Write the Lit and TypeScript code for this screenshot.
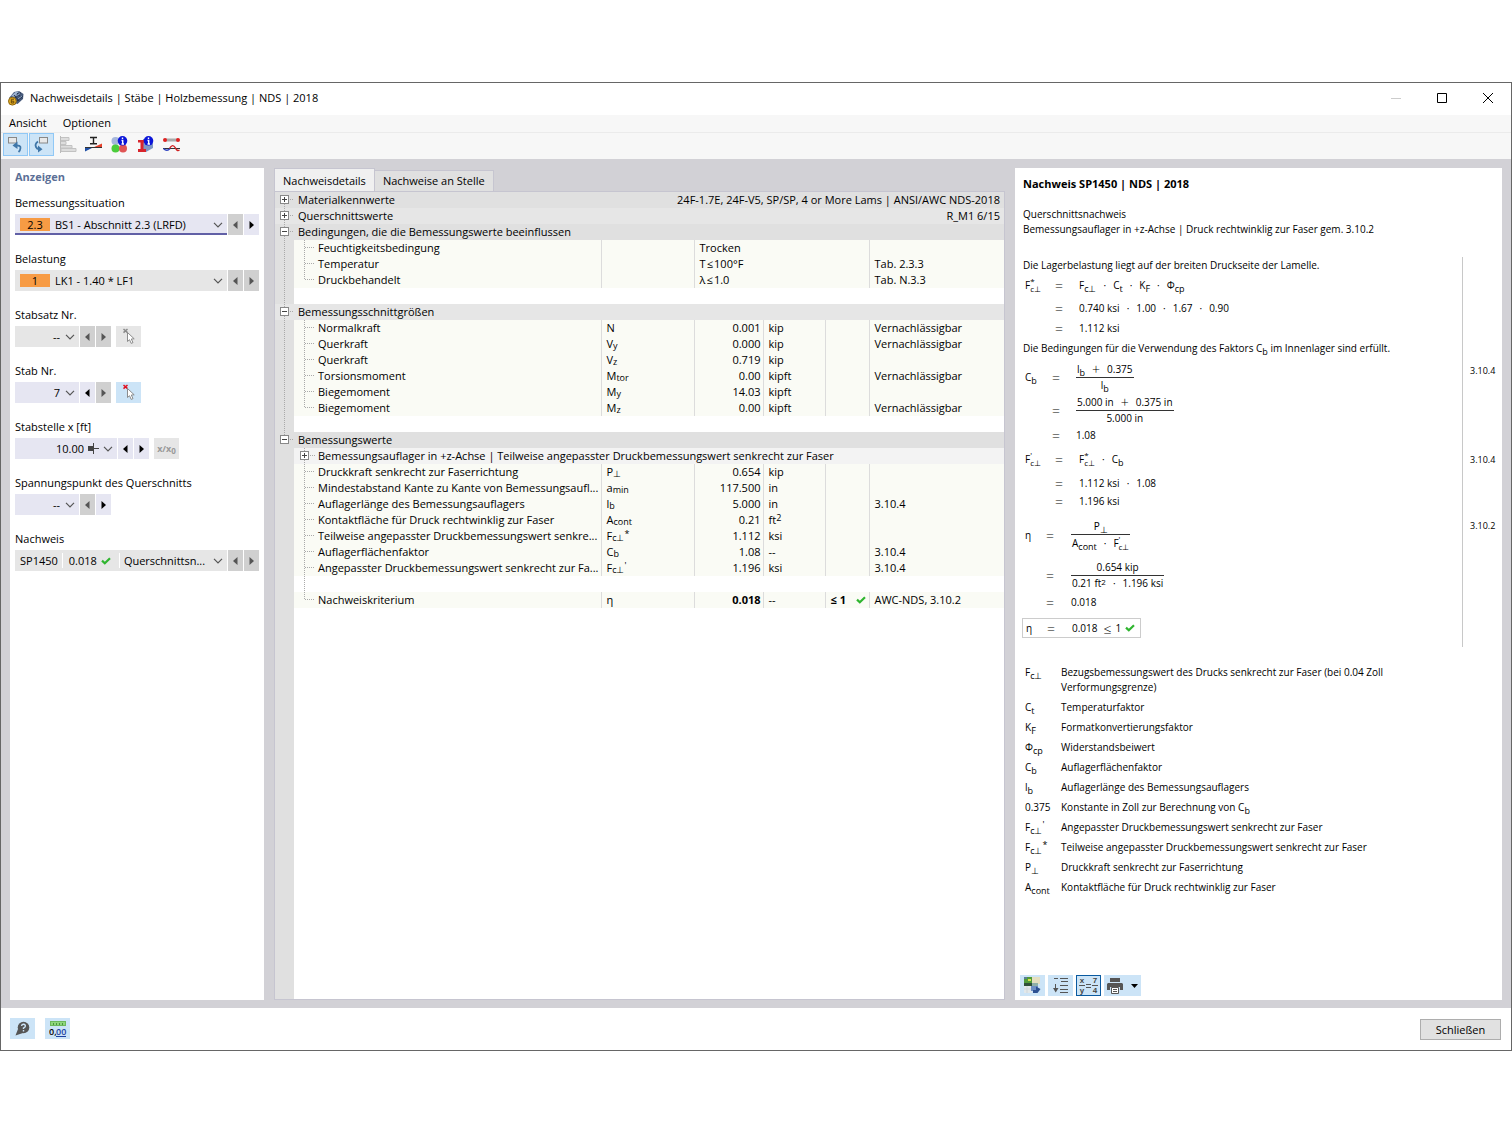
import { LitElement, html, css, svg, nothing } from "lit";
import type { TemplateResult } from "lit";
import { customElement, property, state } from "lit/decorators.js";
import { classMap } from "lit/directives/class-map.js";

type Content = string | TemplateResult;

interface DataRow {
  kind: "data";
  name: string;
  symbol?: Content;
  value?: Content;
  unit?: Content;
  limit?: Content;
  note?: string;
  wide?: boolean;
  strong?: boolean;
  last?: boolean;
}
interface GroupRow {
  kind: "group";
  name: string;
  open: boolean;
  detail?: string;
  shade: "dark" | "mid";
  first?: boolean;
  end?: boolean;
}
interface SubGroupRow {
  kind: "sub";
  name: string;
}
interface BlankRow {
  kind: "blank";
  branch?: boolean;
}
type Row = DataRow | GroupRow | SubGroupRow | BlankRow;

const sub = (base: string, index: string) => html`${base}<sub>${index}</sub>`;

const ROWS: Row[] = [
  { kind: "group", name: "Materialkennwerte", open: false, detail: "24F-1.7E, 24F-V5, SP/SP, 4 or More Lams | ANSI/AWC NDS-2018", shade: "dark", first: true },
  { kind: "group", name: "Querschnittswerte", open: false, detail: "R_M1 6/15", shade: "mid" },
  { kind: "group", name: "Bedingungen, die die Bemessungswerte beeinflussen", open: true, shade: "dark" },
  { kind: "data", name: "Feuchtigkeitsbedingung", value: "Trocken", wide: true },
  { kind: "data", name: "Temperatur", value: "T\u200a≤\u200a100°F", note: "Tab. 2.3.3", wide: true },
  { kind: "data", name: "Druckbehandelt", value: "λ\u200a≤\u200a1.0", note: "Tab. N.3.3", wide: true, last: true },
  { kind: "blank" },
  { kind: "group", name: "Bemessungsschnittgrößen", open: true, shade: "mid" },
  { kind: "data", name: "Normalkraft", symbol: "N", value: "0.001", unit: "kip", note: "Vernachlässigbar" },
  { kind: "data", name: "Querkraft", symbol: sub("V", "y"), value: "0.000", unit: "kip", note: "Vernachlässigbar" },
  { kind: "data", name: "Querkraft", symbol: sub("V", "z"), value: "0.719", unit: "kip" },
  { kind: "data", name: "Torsionsmoment", symbol: sub("M", "tor"), value: "0.00", unit: "kipft", note: "Vernachlässigbar" },
  { kind: "data", name: "Biegemoment", symbol: sub("M", "y"), value: "14.03", unit: "kipft" },
  { kind: "data", name: "Biegemoment", symbol: sub("M", "z"), value: "0.00", unit: "kipft", note: "Vernachlässigbar", last: true },
  { kind: "blank" },
  { kind: "group", name: "Bemessungswerte", open: true, shade: "dark", end: true },
  { kind: "sub", name: "Bemessungsauflager in +z-Achse | Teilweise angepasster Druckbemessungswert senkrecht zur Faser" },
  { kind: "data", name: "Druckkraft senkrecht zur Faserrichtung", symbol: sub("P", "⊥"), value: "0.654", unit: "kip" },
  { kind: "data", name: "Mindestabstand Kante zu Kante von Bemessungsaufl...", symbol: sub("a", "min"), value: "117.500", unit: "in" },
  { kind: "data", name: "Auflagerlänge des Bemessungsauflagers", symbol: sub("l", "b"), value: "5.000", unit: "in", note: "3.10.4" },
  { kind: "data", name: "Kontaktfläche für Druck rechtwinklig zur Faser", symbol: sub("A", "cont"), value: "0.21", unit: html`ft<sup>2</sup>` },
  { kind: "data", name: "Teilweise angepasster Druckbemessungswert senkre...", symbol: html`F<sub>c⊥</sub><sup>*</sup>`, value: "1.112", unit: "ksi" },
  { kind: "data", name: "Auflagerflächenfaktor", symbol: sub("C", "b"), value: "1.08", unit: "--", note: "3.10.4" },
  { kind: "data", name: "Angepasster Druckbemessungswert senkrecht zur Fa...", symbol: html`F<sub>c⊥</sub><sup>'</sup>`, value: "1.196", unit: "ksi", note: "3.10.4" },
  { kind: "blank", branch: true },
  { kind: "data", name: "Nachweiskriterium", symbol: "η", value: "0.018", unit: "--", limit: "≤ 1", note: "AWC-NDS, 3.10.2", strong: true, last: true },
];

const check = html`<svg class="check" width="10" height="8" viewBox="0 0 10 8" aria-hidden="true">
  <path d="M1 3.6 L3.8 6.2 L9 1.2" fill="none" stroke="#2fb52f" stroke-width="2.2" />
</svg>`;

const chevron = html`<svg class="chevron" width="10" height="6" viewBox="0 0 10 6" aria-hidden="true">
  <path d="M1 0.8 L5 4.8 L9 0.8" fill="none" stroke="#555" stroke-width="1.2" />
</svg>`;

const arrow = (dir: "left" | "right") => html`<svg width="5" height="8" viewBox="0 0 5 8" aria-hidden="true">
  <path d=${dir === "left" ? "M4.5 0 V8 L0 4 Z" : "M0.5 0 V8 L5 4 Z"} fill="currentColor" />
</svg>`;

const fontStyles = css`
  * {
    box-sizing: border-box;
  }
  button,
  input,
  select {
    font: inherit;
    color: inherit;
    border: 0;
    border-radius: 0;
    margin: 0;
    padding: 0;
    background: none;
  }
  svg {
    display: block;
    flex: none;
  }
  sub,
  sup {
    font-size: 9px;
    line-height: 0;
  }
  sub {
    vertical-align: -1px;
  }
  sup {
    vertical-align: 3px;
  }
`;

/* ---------- selection panel ---------- */

@customElement("filter-panel")
export class FilterPanel extends LitElement {
  static styles = [
    fontStyles,
    css`
      :host {
        display: block;
        background: #fff;
        padding: 1px 5px;
      }
      h2 {
        margin: 0 0 10px;
        font-size: 11px;
        line-height: 16px;
        color: #5b6f96;
      }
      .field {
        margin-bottom: 16px;
      }
      label {
        display: block;
        line-height: 16px;
        margin-bottom: 3px;
      }
      .line {
        display: flex;
        gap: 1px;
        height: 21px;
      }
      .combo {
        display: flex;
        align-items: center;
        gap: 5px;
        width: 64px;
        padding: 0 4px 0 5px;
        background: #e6e6f2;
      }
      .combo.full {
        flex: 1;
        width: auto;
        min-width: 0;
      }
      .combo.mid {
        width: 102px;
        gap: 4px;
      }
      .combo.dense {
        gap: 4px;
      }
      .combo.off {
        background: #e6e6e6;
      }
      .combo.focus {
        box-shadow: inset 0 -2px #6160a6;
      }
      select,
      input {
        appearance: none;
        flex: 1;
        min-width: 0;
        width: 0;
        height: 19px;
        outline: none;
        opacity: 1;
        color: #000;
      }
      .num select,
      .num input {
        text-align: right;
        text-align-last: right;
      }
      .badge {
        width: 30px;
        height: 13px;
        line-height: 13px;
        text-align: center;
        background: #f79b44;
      }
      .ratio {
        display: flex;
        align-items: center;
        gap: 4px;
        padding: 0 8px 0 6px;
        height: 15px;
        border: solid #fff;
        border-width: 0 1px;
      }
      .step {
        display: flex;
        align-items: center;
        justify-content: center;
        width: 15px;
        background: #e6e6f2;
        color: #000;
      }
      .step:disabled {
        background: #d0d0d0;
        color: #555;
      }
      .tool {
        display: flex;
        align-items: center;
        justify-content: center;
        width: 25px;
        margin-left: 4px;
        background: #cce4f7;
      }
      .tool:disabled {
        background: #e6e6e6;
        color: #999;
        font-weight: 700;
      }
      .frac {
        font-size: 9px;
      }
      .frac sub {
        font-size: 8px;
        vertical-align: -2px;
      }
    `,
  ];

  private step(dir: "left" | "right", enabled: boolean) {
    return html`<button class="step" ?disabled=${!enabled} aria-label=${dir === "left" ? "Zurück" : "Weiter"}>${arrow(dir)}</button>`;
  }

  private pick(enabled: boolean) {
    return html`<button class="tool" ?disabled=${!enabled} aria-label="Auswählen">
      <svg width="14" height="17" viewBox="0 0 14 17">
        <path d="M1.5 1 L5.5 4.6 M5.5 1 L1.5 4.6" stroke=${enabled ? "#e01020" : "#8a8a8a"} stroke-width="1.5" />
        <path d="M5.5 4.5 V13.5 L7.5 11.7 L9.2 15.4 L11 14.6 L9.3 11 L12.2 10.8 Z" fill="#fff" stroke="#808080" stroke-width="0.9" />
      </svg>
    </button>`;
  }

  render() {
    return html`
      <h2>Anzeigen</h2>
      <div class="field">
        <label for="situation">Bemessungssituation</label>
        <div class="line">
          <div class="combo full focus">
            <span class="badge">2.3</span>
            <select id="situation"><option>BS1 - Abschnitt 2.3 (LRFD)</option></select>
            ${chevron}
          </div>
          ${this.step("left", false)} ${this.step("right", true)}
        </div>
      </div>
      <div class="field">
        <label for="load">Belastung</label>
        <div class="line">
          <div class="combo full off">
            <span class="badge">1</span>
            <select id="load" disabled><option>LK1 - 1.40 * LF1</option></select>
            ${chevron}
          </div>
          ${this.step("left", false)} ${this.step("right", false)}
        </div>
      </div>
      <div class="field">
        <label for="set">Stabsatz Nr.</label>
        <div class="line">
          <div class="combo num off">
            <select id="set" disabled><option>--</option></select>
            ${chevron}
          </div>
          ${this.step("left", false)} ${this.step("right", false)} ${this.pick(false)}
        </div>
      </div>
      <div class="field">
        <label for="member">Stab Nr.</label>
        <div class="line">
          <div class="combo num">
            <select id="member"><option>7</option></select>
            ${chevron}
          </div>
          ${this.step("left", true)} ${this.step("right", false)} ${this.pick(true)}
        </div>
      </div>
      <div class="field">
        <label for="position">Stabstelle x [ft]</label>
        <div class="line">
          <div class="combo num mid">
            <input id="position" type="text" .value=${"10.00"} />
            <svg width="11" height="11" viewBox="0 0 11 11">
              <path d="M0 3 H5 V8 H0 Z" fill="#444" />
              <path d="M5.5 0 V11 M0 5.5 H11" stroke="#444" />
            </svg>
            ${chevron}
          </div>
          ${this.step("left", true)} ${this.step("right", true)}
          <button class="tool frac" disabled><span>x/x<sub>0</sub></span></button>
        </div>
      </div>
      <div class="field">
        <label for="stress">Spannungspunkt des Querschnitts</label>
        <div class="line">
          <div class="combo num">
            <select id="stress"><option>--</option></select>
            ${chevron}
          </div>
          ${this.step("left", false)} ${this.step("right", true)}
        </div>
      </div>
      <div class="field">
        <label for="check">Nachweis</label>
        <div class="line">
          <div class="combo full off dense">
            <span>SP1450</span>
            <span class="ratio">0.018 ${check}</span>
            <select id="check" disabled><option>Querschnittsn...</option></select>
            ${chevron}
          </div>
          ${this.step("left", false)} ${this.step("right", false)}
        </div>
      </div>
    `;
  }
}

/* ---------- result tree table ---------- */

@customElement("detail-table")
export class DetailTable extends LitElement {
  @property({ attribute: false }) rows: Row[] = [];

  static styles = [
    fontStyles,
    css`
      :host {
        display: block;
      }
      table {
        width: 100%;
        table-layout: fixed;
        border-collapse: collapse;
        border-spacing: 0;
      }
      tr {
        height: 16px;
      }
      td,
      th {
        padding: 0;
        height: 16px;
        line-height: 16px;
        text-align: left;
        font-weight: 400;
        white-space: nowrap;
      }
      .c-gutter {
        width: 19px;
      }
      .c-name {
        width: 307px;
      }
      .c-symbol {
        width: 93px;
      }
      .c-value {
        width: 69px;
      }
      .c-unit {
        width: 62px;
      }
      .c-limit {
        width: 44px;
      }
      .dark {
        background: #e0e0e0;
      }
      .mid {
        background: #e6e6e6;
      }
      .light {
        background: #f3f3f3;
      }
      .data {
        background: #fafbf5;
      }
      .gutter {
        background: #e0e0e0;
      }
      .mid .gutter {
        background: #e6e6e6;
      }
      .node {
        display: flex;
        align-items: center;
        height: 16px;
      }
      .group-name {
        padding-left: 4px;
      }
      .detail {
        text-align: right;
        padding-right: 4px;
      }
      .cell {
        border-left: 1px solid #dcdcdc;
        padding-left: 5px;
      }
      .right {
        text-align: right;
        padding: 0 2px 0 0;
      }
      .strong {
        font-weight: 700;
      }
      .limit {
        display: flex;
        align-items: center;
        justify-content: space-between;
        padding-right: 3px;
        font-weight: 700;
      }
      button {
        display: block;
      }
    `,
  ];

  private trunk() {
    return html`<svg width="19" height="16" viewBox="0 0 19 16" aria-hidden="true">
      <path d="M9.5 0 V16" stroke="#aaa" stroke-dasharray="1 1" />
    </svg>`;
  }

  private branch(last = false) {
    return html`<svg width="24" height="16" viewBox="0 0 24 16" aria-hidden="true">
      <path d="M10.5 0 V${last ? 8 : 16} M11 7.5 H21" fill="none" stroke="#aaa" stroke-dasharray="1 1" />
    </svg>`;
  }

  private afterEnd(index: number) {
    const end = this.rows.findIndex((r) => r.kind === "group" && r.end);
    return end >= 0 && index > end;
  }

  private renderRow(row: Row, index: number) {
    const gutter = html`<td class="gutter">${this.afterEnd(index) ? nothing : this.trunk()}</td>`;
    switch (row.kind) {
      case "group":
        return html`<tr class=${row.shade}>
          <td class="gutter">
            <button aria-label=${row.name} aria-expanded=${row.open ? "true" : "false"}>
              <svg width="19" height="16" viewBox="0 0 19 16">
                <path d="M9.5 ${row.first ? 8 : 0} V${row.end ? 8 : 16} M15 7.5 H19" stroke="#aaa" stroke-dasharray="1 1" />
                <rect x="5.5" y="3.5" width="8" height="8" fill="#fff" stroke="#888" />
                <path d="M7 7.5 H12" stroke="#444" />
                ${row.open ? nothing : svg`<path d="M9.5 5 V10" stroke="#444" />`}
              </svg>
            </button>
          </td>
          <th class="group-name" scope="rowgroup" colspan=${row.detail ? 1 : 6}>${row.name}</th>
          ${row.detail ? html`<td class="detail" colspan="5">${row.detail}</td>` : nothing}
        </tr>`;
      case "sub":
        return html`<tr class="light">
          ${gutter}
          <th colspan="6" scope="row">
            <div class="node">
              <button aria-label=${row.name} aria-expanded="false">
                <svg width="24" height="16" viewBox="0 0 24 16">
                  <path d="M10.5 0 V16 M16 7.5 H21" stroke="#aaa" stroke-dasharray="1 1" />
                  <rect x="6.5" y="3.5" width="8" height="8" fill="#fff" stroke="#888" />
                  <path d="M8 7.5 H13 M10.5 5 V10" stroke="#444" />
                </svg>
              </button>
              <span>${row.name}</span>
            </div>
          </th>
        </tr>`;
      case "blank":
        return html`<tr>
          ${gutter}
          <td colspan="6">
            ${row.branch
              ? html`<svg width="24" height="16" viewBox="0 0 24 16"><path d="M10.5 0 V16" stroke="#aaa" stroke-dasharray="1 1" /></svg>`
              : nothing}
          </td>
        </tr>`;
      case "data":
        return html`<tr class="data">
          ${gutter}
          <th scope="row">
            <div class="node">${this.branch(row.last)}<span>${row.name}</span></div>
          </th>
          <td class="cell">${row.symbol ?? ""}</td>
          ${row.wide
            ? html`<td class="cell" colspan="3">${row.value}</td>`
            : html`<td class=${classMap({ cell: true, right: true, strong: !!row.strong })}>${row.value ?? ""}</td>
                <td class="cell">${row.unit ?? ""}</td>
                <td class="cell">
                  ${row.limit ? html`<div class="limit"><span>${row.limit}</span>${check}</div>` : nothing}
                </td>`}
          <td class="cell">${row.note ?? ""}</td>
        </tr>`;
    }
  }

  render() {
    return html`<table>
      <colgroup>
        <col class="c-gutter" /><col class="c-name" /><col class="c-symbol" /><col class="c-value" />
        <col class="c-unit" /><col class="c-limit" /><col />
      </colgroup>
      <tbody>
        ${this.rows.map((row, i) => this.renderRow(row, i))}
      </tbody>
    </table>`;
  }
}

/* ---------- formula report ---------- */

const both = (base: string, top: string, bottom: string) =>
  html`<span class="both"><span>${base}</span><span class="stack"><span>${top}</span><span>${bottom}</span></span></span>`;

const product = (...parts: Content[]) =>
  html`<span class="ops">${parts.map((p, i) => html`${i ? html`<span>·</span>` : nothing}<span>${p}</span>`)}</span>`;

const sum = (...parts: Content[]) =>
  html`<span class="ops">${parts.map((p, i) => html`${i ? html`<span class="sign">+</span>` : nothing}<span>${p}</span>`)}</span>`;

const fraction = (top: Content, bottom: Content) =>
  html`<span class="fraction"><span class="top">${top}</span><span>${bottom}</span></span>`;

@customElement("formula-report")
export class FormulaReport extends LitElement {
  static styles = [
    fontStyles,
    css`
      :host {
        display: flex;
        flex-direction: column;
        background: #fff;
        padding: 8px 0 4px 8px;
        font-size: 10px;
        line-height: 15px;
      }
      h2 {
        margin: 0 0 15px;
        font-size: 11px;
        line-height: 16px;
      }
      p {
        margin: 0;
      }
      .intro {
        margin-bottom: 20px;
      }
      .row {
        display: grid;
        grid-template-columns: 1fr 40px;
      }
      .main {
        display: flex;
        align-items: center;
        min-height: 18px;
      }
      .first {
        min-height: 16px;
      }
      .s .main {
        min-height: 22px;
      }
      .m .main {
        min-height: 24px;
      }
      .l .main {
        min-height: 30px;
      }
      .xl .main {
        min-height: 36px;
      }
      .xxl .main {
        min-height: 50px;
      }
      .ref {
        border-left: 1px solid #c8c8c8;
        padding: 4px 0 0 7px;
        font-size: 9px;
      }
      .l .ref,
      .xxl .ref {
        padding-top: 8px;
      }
      .end {
        height: 4px;
      }
      .eq {
        display: grid;
        grid-template-columns: 30px 24px auto;
        align-items: center;
        padding-left: 2px;
      }
      .eq.b {
        grid-template-columns: 27px 24px auto;
      }
      .eq.c {
        grid-template-columns: 21px 25px auto;
      }
      .sign {
        font-size: 14px;
        font-weight: 300;
      }
      .ops {
        display: inline-flex;
        align-items: center;
        gap: 7px;
      }
      .both {
        display: inline-flex;
        align-items: center;
      }
      .stack {
        display: flex;
        flex-direction: column;
        font-size: 8px;
        line-height: 8px;
      }
      .fraction {
        display: inline-flex;
        flex-direction: column;
        align-items: center;
        line-height: 15px;
      }
      .fraction .top {
        align-self: stretch;
        text-align: center;
        border-bottom: 1px solid #333;
      }
      .fraction > span {
        padding: 0 1px;
      }
      .boxed {
        border: 1px solid #ccc;
        margin-left: -1px;
        height: 20px;
        padding: 0 5px 0 3px;
      }
      .verdict {
        display: flex;
        align-items: center;
        gap: 4px;
      }
      .verdict .sign {
        margin-left: 2px;
      }
      sub,
      sup {
        font-size: 9px;
      }
      sub {
        vertical-align: -3px;
      }
      .fraction sup {
        font-size: 8px;
        vertical-align: 2px;
      }
      dl {
        display: grid;
        grid-template-columns: 36px 1fr;
        row-gap: 5px;
        margin: 18px 60px 0 2px;
      }
      dt,
      dd {
        margin: 0;
        line-height: 15px;
      }
      .tools {
        display: flex;
        gap: 3px;
        margin-top: auto;
        margin-left: -3px;
      }
      .tools button {
        display: flex;
        align-items: center;
        justify-content: center;
        gap: 8px;
        width: 25px;
        height: 21px;
        background: #cce4f7;
      }
      .tools .active {
        border: 1px solid #0a5aa0;
        gap: 1px;
        color: #444;
        font: 700 8px/9px "Liberation Sans", sans-serif;
      }
      .mini {
        display: flex;
        flex-direction: column;
        width: 6px;
      }
      .mini .over {
        border-bottom: 1px solid #555;
      }
      .tools .wide {
        width: 37px;
      }
    `,
  ];

  private line(size: string, block: string, lhs: Content, rhs: Content, ref = "") {
    return html`<div class="row ${size}">
      <div class="main"><div class="eq ${block}"><span>${lhs}</span><span class="sign">=</span><span>${rhs}</span></div></div>
      <div class="ref">${ref}</div>
    </div>`;
  }

  render() {
    return html`
      <h2>Nachweis SP1450 | NDS | 2018</h2>
      <div class="intro">
        <p>Querschnittsnachweis</p>
        <p>Bemessungsauflager in +z-Achse | Druck rechtwinklig zur Faser gem. 3.10.2</p>
      </div>
      <section>
        <div class="row"><p class="main first">Die Lagerbelastung liegt auf der breiten Druckseite der Lamelle.</p><div class="ref"></div></div>
        ${this.line("m", "", both("F", "*", "c⊥"), product(sub("F", "c⊥"), sub("C", "t"), sub("K", "F"), sub("Φ", "cp")))}
        ${this.line("s", "", "", product("0.740 ksi", "1.00", "1.67", "0.90"))}
        ${this.line("", "", "", "1.112 ksi")}
        <div class="row s"><p class="main"><span>Die Bedingungen für die Verwendung des Faktors C<sub>b</sub> im Innenlager sind erfüllt.</span></p><div class="ref"></div></div>
        ${this.line("xl", "b", sub("C", "b"), fraction(sum(sub("l", "b"), "0.375"), sub("l", "b")), "3.10.4")}
        ${this.line("l", "b", "", fraction(sum("5.000 in", "0.375 in"), "5.000 in"))}
        ${this.line("", "b", "", "1.08")}
        ${this.line("l", "", both("F", "'", "c⊥"), product(both("F", "*", "c⊥"), sub("C", "b")), "3.10.4")}
        ${this.line("", "", "", product("1.112 ksi", "1.08"))}
        ${this.line("", "", "", "1.196 ksi")}
        ${this.line("xxl", "c", "η", fraction(sub("P", "⊥"), product(sub("A", "cont"), both("F", "'", "c⊥"))), "3.10.2")}
        ${this.line("m", "c", "", fraction("0.654 kip", product(html`0.21 ft<sup>2</sup>`, "1.196 ksi")))}
        ${this.line("s", "c", "", "0.018")}
        <div class="row l">
          <div class="main">
            <div class="eq c boxed">
              <span>η</span><span class="sign">=</span>
              <span class="verdict"><span>0.018</span><span class="sign">≤</span><span>1</span>${check}</span>
            </div>
          </div>
          <div class="ref"></div>
        </div>
        <div class="row end"><div></div><div class="ref"></div></div>
      </section>
      <dl>
        <dt>${sub("F", "c⊥")}</dt><dd>Bezugsbemessungswert des Drucks senkrecht zur Faser (bei 0.04 Zoll Verformungsgrenze)</dd>
        <dt>${sub("C", "t")}</dt><dd>Temperaturfaktor</dd>
        <dt>${sub("K", "F")}</dt><dd>Formatkonvertierungsfaktor</dd>
        <dt>${sub("Φ", "cp")}</dt><dd>Widerstandsbeiwert</dd>
        <dt>${sub("C", "b")}</dt><dd>Auflagerflächenfaktor</dd>
        <dt>${sub("l", "b")}</dt><dd>Auflagerlänge des Bemessungsauflagers</dd>
        <dt>0.375</dt><dd>Konstante in Zoll zur Berechnung von C<sub>b</sub></dd>
        <dt>F<sub>c⊥</sub><sup>'</sup></dt><dd>Angepasster Druckbemessungswert senkrecht zur Faser</dd>
        <dt>F<sub>c⊥</sub><sup>*</sup></dt><dd>Teilweise angepasster Druckbemessungswert senkrecht zur Faser</dd>
        <dt>${sub("P", "⊥")}</dt><dd>Druckkraft senkrecht zur Faserrichtung</dd>
        <dt>${sub("A", "cont")}</dt><dd>Kontaktfläche für Druck rechtwinklig zur Faser</dd>
      </dl>
      <div class="tools">
        <button aria-label="Bild">
          <svg width="17" height="17" viewBox="0 0 17 17">
            <rect x="0" y="0" width="8" height="6" fill="#4f9a3a" />
            <path d="M0 0 H3 V2 H0 Z" fill="#5b7f95" /><path d="M4 2 H7 V4 H4 Z" fill="#d8e04a" />
            <rect x="8" y="0" width="8" height="7" fill="#e4dfc0" />
            <path d="M0 6 H8 V9 H0 Z" fill="#2f4f38" /><path d="M8 6 H14 V9 H8 Z" fill="#8fb0a8" />
            <rect x="0" y="9" width="8" height="7" fill="#e2e8ea" />
            <path d="M3 9 V16 M0 12 H8" stroke="#cfd6da" />
            <rect x="7" y="9" width="7" height="5" fill="#6e8fc4" />
            <path d="M9 13 H12 V9.5 L16.5 12 L13.5 16 H9 Z" fill="#2c5092" />
          </svg>
        </button>
        <button aria-label="Sprung">
          <svg width="15" height="17" viewBox="0 0 15 17">
            <path d="M1 1.5 H5 M7 1.5 H15 M8 4.5 H15 M7 8.5 H15 M7 12.5 H15 M7 15.5 H15" stroke="#555" stroke-width="1.2" />
            <path d="M2.5 7 V14" stroke="#555" /><path d="M0 11 H5.5 L2.7 15.5 Z" fill="#555" />
          </svg>
        </button>
        <button class="active" aria-label="Werte in Formeln">
          <span class="mini"><span class="over">x</span><span>y</span></span>
          <svg width="5" height="4" viewBox="0 0 5 4"><path d="M0 0.5 H5 M0 3.5 H5" stroke="#555" /></svg>
          <span class="mini"><span class="over">7</span><span>4</span></span>
        </button>
        <button class="wide" aria-label="Drucken">
          <svg width="16" height="16" viewBox="0 0 16 16">
            <path d="M3 0 H13 V4 H3 Z M1 5 H15 L16 6 V12 H13 V9 H3 V12 H0 V6 Z" fill="#555" />
            <path d="M4.5 9.5 H11.5 V15.5 H4.5 Z" fill="#fff" stroke="#555" />
            <path d="M6 11.5 H10 M6 13.5 H10" stroke="#555" />
          </svg>
          <svg width="7" height="4" viewBox="0 0 7 4"><path d="M0 0 H7 L3.5 4 Z" fill="#000" /></svg>
        </button>
      </div>
    `;
  }
}

/* ---------- window ---------- */

@customElement("app-root")
export class AppRoot extends LitElement {
  @state() private tab = 0;

  static styles = [
    fontStyles,
    css`
      :host {
        display: flex;
        box-sizing: border-box;
        min-height: 100vh;
        padding: 82px 0 83px;
        background: #fff;
        color: #000;
        font: 11px/16px "Open Sans", "Noto Sans", sans-serif;
      }
      .window {
        flex: 1;
        min-width: 0;
        display: flex;
        flex-direction: column;
        border: 1px solid #666;
        background: #fff;
      }
      header {
        display: flex;
        align-items: center;
        gap: 6px;
        height: 32px;
        padding: 0 17px 2px 7px;
      }
      h1 {
        flex: 1;
        margin: 0;
        font-size: 11px;
        font-weight: 400;
      }
      .controls {
        display: flex;
        gap: 34px;
      }
      nav {
        display: flex;
        gap: 16px;
        height: 18px;
        padding: 0 8px 2px;
        background: #f7f7f7;
        border-bottom: 1px solid #ebebeb;
      }
      .toolbar {
        display: flex;
        gap: 1px;
        height: 26px;
        padding-left: 2px;
        background: #f7f7f7;
      }
      .toolbar button {
        display: flex;
        align-items: center;
        justify-content: center;
        width: 25px;
        height: 23px;
        border: 1px solid transparent;
      }
      .toolbar .on {
        background: #cce4f7;
        border-color: #90c8f6;
      }
      .body {
        flex: 1;
        display: grid;
        grid-template-columns: 254px minmax(0, 1fr) 487px;
        gap: 10px;
        padding: 9px 9px 8px;
        background: #d2d1d6;
      }
      .center {
        display: flex;
        flex-direction: column;
      }
      .tabs {
        display: flex;
        align-items: flex-end;
        height: 23px;
      }
      .tabs button {
        height: 21px;
        padding: 0 8px;
        background: #e0e0e0;
        border: 1px solid #c6c5d0;
        border-left: 0;
        border-bottom: 0;
      }
      .tabs .current {
        height: 23px;
        padding: 2px 8px 0;
        background: #f0f0f0;
        border-left: 1px solid #c6c5d0;
      }
      .sheet {
        flex: 1;
        border: 1px solid #c6c5d0;
        background: linear-gradient(to right, #e0e0e0 19px, #fff 19px);
      }
      footer {
        display: flex;
        align-items: flex-start;
        gap: 10px;
        height: 42px;
        padding: 10px 10px 0 9px;
      }
      footer .square {
        display: flex;
        align-items: center;
        justify-content: center;
        width: 25px;
        height: 21px;
        background: #cce4f7;
      }
      .close {
        margin: 1px 0 0 auto;
        width: 81px;
        height: 21px;
        background: #e1e1e1;
        border: 1px solid #adadad;
      }
      .tiny {
        font: 600 9px "Open Sans", sans-serif;
      }
    `,
  ];

  render() {
    return html`<div class="window">
      <header>
        <svg width="16" height="16" viewBox="0 0 16 16" aria-hidden="true">
          <path d="M1 8 L6 2 L11 1 L15.5 4 L15 9 L9.5 14 L4 12 Z" fill="#46597a" />
          <path d="M3 6 L7.5 2 L11 1.5 L6.5 7 Z" fill="#9db2d0" />
          <path d="M7 8 L13 2.5 M9 11 L15 6 M6 5 L11 11 M9 3 L14 8.5" stroke="#26364f" />
          <path d="M8 6 L12 3.5 M10 9 L14 6" stroke="#8fa5c6" />
          <circle cx="4.4" cy="11.2" r="3.9" fill="#e5ae24" stroke="#8a6410" />
          <path d="M6 9.2 H3.3 V13 H5.8 V11.2 H3.3" fill="none" stroke="#6b4a08" />
        </svg>
        <h1>Nachweisdetails | Stäbe | Holzbemessung | NDS | 2018</h1>
        <div class="controls">
          <button aria-label="Minimieren"><svg width="12" height="12" viewBox="0 0 12 12"><path d="M1 6.5 H11" stroke="#ccc" /></svg></button>
          <button aria-label="Maximieren"><svg width="12" height="12" viewBox="0 0 12 12"><path d="M1.5 1.5 H10.5 V10.5 H1.5 Z" fill="none" stroke="#000" /></svg></button>
          <button aria-label="Fenster schließen"><svg width="12" height="12" viewBox="0 0 12 12"><path d="M1 1 L11 11 M11 1 L1 11" stroke="#000" /></svg></button>
        </div>
      </header>
      <nav><button>Ansicht</button><button>Optionen</button></nav>
      <div class="toolbar">
        <button class="on" aria-label="Rückgängig">
          <svg width="17" height="17" viewBox="0 0 17 17">
            <rect x="1.5" y="1.5" width="8" height="5.5" fill="#e8e8e8" stroke="#888" />
            <path d="M8 9.5 Q14 9 13.5 12 Q13.3 14.5 11.5 16" fill="none" stroke="#3f76a8" stroke-width="1.8" />
            <path d="M5.5 9.5 L10.5 5.5 V13 Z" fill="#3f76a8" />
          </svg>
        </button>
        <button class="on" aria-label="Wiederherstellen">
          <svg width="17" height="17" viewBox="0 0 17 17">
            <rect x="6.5" y="1.5" width="8" height="5.5" fill="#e8e8e8" stroke="#888" />
            <path d="M5 5.5 Q1.5 8 3 11 Q4 13 6 13.2" fill="none" stroke="#3f76a8" stroke-width="1.8" />
            <path d="M9.5 13.2 L5 9.5 V16.5 Z" fill="#3f76a8" />
          </svg>
        </button>
        <button aria-label="Diagramm">
          <svg width="18" height="17" viewBox="0 0 18 17">
            <path d="M1.5 0 V17" stroke="#bbb" />
            <path d="M2 1.5 H10 V4.5 H2 M2 5.5 H7 V8.5 H2 M2 9.5 H13 V12 H2 M2 12.5 H17 V15.5 H2 Z" fill="#ddd" stroke="#c2c2c2" />
          </svg>
        </button>
        <button aria-label="Spannungen">
          <svg width="17" height="17" viewBox="0 0 17 17">
            <path d="M5 1.5 H12 M8.5 1.5 V8 M5 7.8 H12" stroke="#222" stroke-width="1.4" />
            <path d="M0 11 H9 L0 15.5 Z" fill="#1f4fa5" /><path d="M17 7.5 V12 H7 Z" fill="#e5402a" /><path d="M0 11.5 H17" stroke="#333" />
          </svg>
        </button>
        <button aria-label="Material-Info">
          <svg width="17" height="17" viewBox="0 0 17 17">
            <circle cx="4.5" cy="5" r="4" fill="#a5b6dc" /><circle cx="4.5" cy="12.5" r="4" fill="#4ccc3c" />
            <circle cx="12" cy="12.5" r="4" fill="#e05555" /><circle cx="11.5" cy="4.8" r="4.8" fill="#0a14d8" />
            <path d="M11.5 1.5 V3 M10.5 4.5 H11.7 V8 M10.5 8 H13" stroke="#fff" stroke-width="1.4" fill="none" />
          </svg>
        </button>
        <button aria-label="Querschnitt-Info">
          <svg width="17" height="17" viewBox="0 0 17 17">
            <path d="M6 3 H12 L16 7 V12 L9 16 H6 Z" fill="#7e97c4" />
            <path d="M1 4 H9 V6.5 H6.5 V13 H9 V16 H1 V13 H3.5 V6.5 H1 Z" fill="#d8242c" />
            <circle cx="11.5" cy="4.8" r="4.8" fill="#0a14d8" />
            <path d="M11.5 1.5 V3 M10.5 4.5 H11.7 V8 M10.5 8 H13" stroke="#fff" stroke-width="1.4" fill="none" />
          </svg>
        </button>
        <button aria-label="Verlauf">
          <svg width="17" height="17" viewBox="0 0 17 17">
            <path d="M2 4 H15" stroke="#aaa" stroke-width="3" /><circle cx="2" cy="4" r="2" fill="#e02020" /><circle cx="15" cy="4" r="2" fill="#e02020" />
            <path d="M0 12.5 H17" stroke="#333" />
            <path d="M0.5 12.5 Q4 16 7 12.5" fill="none" stroke="#2a3fc0" stroke-width="1.4" /><path d="M6.5 12.5 Q9.5 7 12.5 12 Q14 15.5 16.5 14" fill="none" stroke="#d02020" stroke-width="1.4" />
          </svg>
        </button>
      </div>
      <div class="body">
        <filter-panel></filter-panel>
        <main class="center">
          <div class="tabs" role="tablist">
            ${["Nachweisdetails", "Nachweise an Stelle"].map(
              (name, i) => html`<button
                role="tab"
                class=${classMap({ current: i === this.tab })}
                aria-selected=${i === this.tab ? "true" : "false"}
                @click=${() => (this.tab = i)}
              >${name}</button>`,
            )}
          </div>
          <div class="sheet"><detail-table .rows=${ROWS}></detail-table></div>
        </main>
        <formula-report></formula-report>
      </div>
      <footer>
        <button class="square" aria-label="Hilfe">
          <svg width="15" height="15" viewBox="0 0 15 15">
            <circle cx="8.5" cy="6.5" r="5.8" fill="#555" /><path d="M3 8 L0.5 14.5 L8 12 Z" fill="#555" />
            <path d="M6.5 5 Q6.8 3.2 8.7 3.3 Q10.6 3.6 10.3 5.2 Q10 6.2 8.5 7 V8 M8.5 9 V10.5" fill="none" stroke="#cce4f7" stroke-width="1.4" />
          </svg>
        </button>
        <button class="square" aria-label="Einheiten">
          <svg width="18" height="16" viewBox="0 0 18 16">
            <rect x="1.5" y="0.5" width="15" height="4" fill="#8ed67c" stroke="#6cb85c" />
            <path d="M4.5 2 V4 M7.5 2 V4 M10.5 2 V4 M13.5 2 V4" stroke="#4a9440" />
            <text class="tiny" x="0" y="14">0,</text><text class="tiny" x="7" y="14" fill="#1d3fa0">00</text>
            <path d="M7 15.5 H17" stroke="#1d3fa0" />
          </svg>
        </button>
        <button class="close">Schließen</button>
      </footer>
    </div>`;
  }
}
